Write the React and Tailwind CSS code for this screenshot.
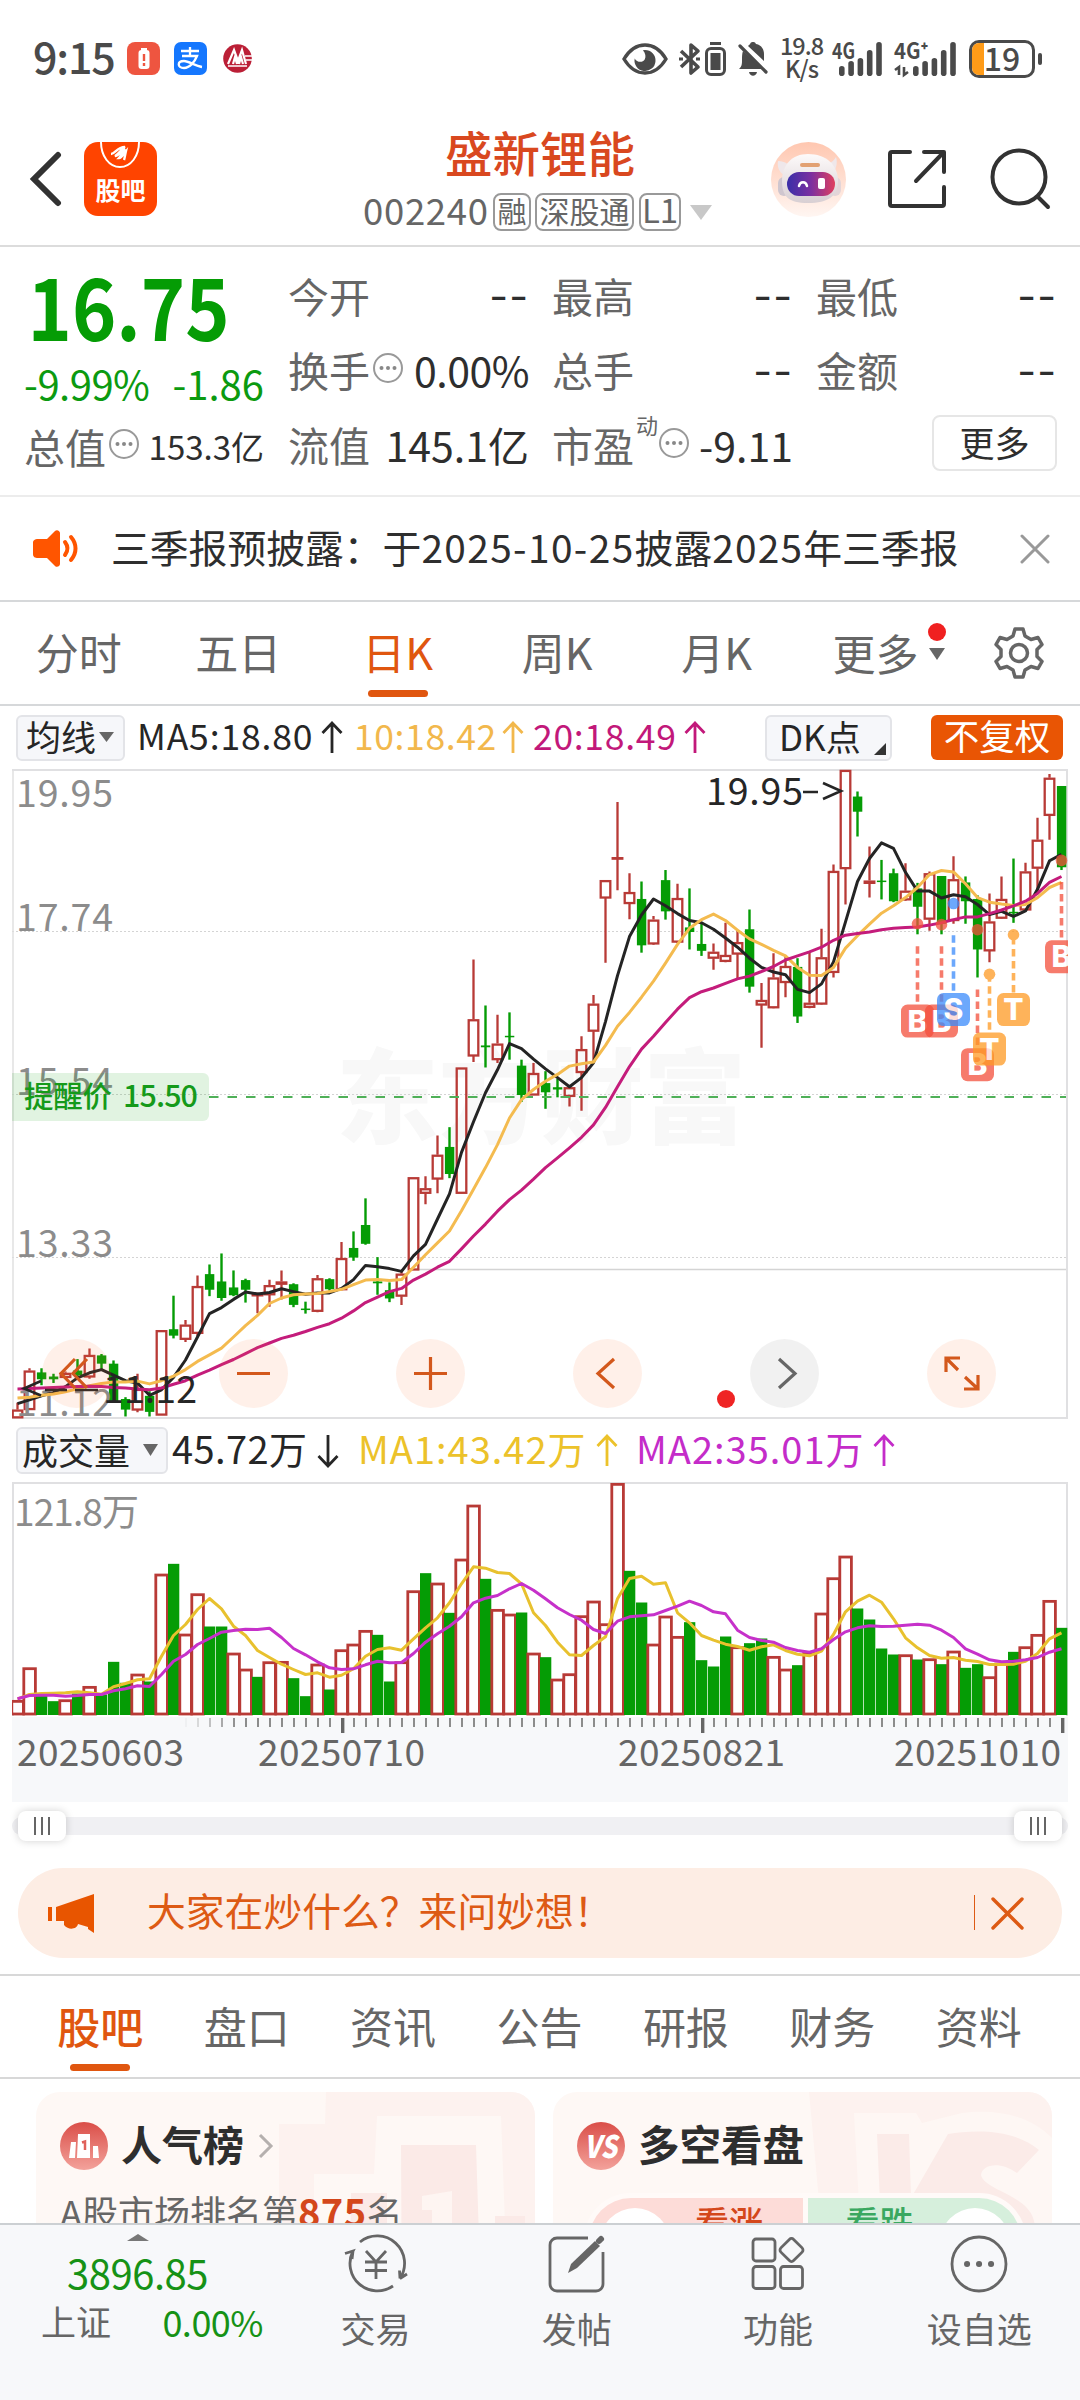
import React from 'react';

const UP = '#b83a36';
const DOWN = '#059c05';

// shared horizontal position of the n-th trading day inside a pane
const dayX = (n) => 5.5 + n * 12;
const priceY = (v) => (v - 150) * 0.4592;
const volumeY = (v) => v / 3 - 82.5;

// [direction, high, body top, body bottom, low]
const candles = [
  ['r', 1530, 1545, 1563, 1563], ['r', 1455, 1460, 1545, 1545], ['g', 1455, 1464, 1479, 1492], ['g', 1467, 1473, 1479, 1487],
  ['r', 1462, 1465, 1475, 1477], ['g', 1435, 1460, 1470, 1475], ['r', 1412, 1426, 1474, 1478], ['g', 1424, 1427, 1445, 1458],
  ['g', 1438, 1445, 1528, 1528], ['g', 1518, 1522, 1545, 1560], ['r', 1467, 1500, 1546, 1551], ['g', 1505, 1515, 1550, 1560],
  ['r', 1372, 1372, 1557, 1557], ['g', 1297, 1370, 1384, 1390], ['r', 1350, 1360, 1392, 1398], ['r', 1253, 1276, 1379, 1385],
  ['g', 1229, 1250, 1284, 1298], ['g', 1205, 1266, 1302, 1308], ['g', 1242, 1279, 1296, 1298], ['g', 1260, 1263, 1284, 1312],
  ['r', 1290, 1293, 1295, 1335], ['r', 1262, 1274, 1295, 1321], ['r', 1242, 1266, 1272, 1305], ['g', 1270, 1272, 1317, 1322],
  ['g', 1310, 1325, 1328, 1336], ['r', 1252, 1259, 1331, 1333], ['g', 1259, 1261, 1283, 1288], ['r', 1180, 1215, 1284, 1285],
  ['g', 1157, 1193, 1214, 1221], ['g', 1085, 1143, 1184, 1186], ['g', 1213, 1266, 1270, 1295], ['g', 1268, 1285, 1303, 1311],
  ['r', 1243, 1249, 1298, 1317], ['r', 1039, 1039, 1241, 1241], ['r', 1037, 1063, 1074, 1098], ['r', 948, 990, 1043, 1074],
  ['g', 930, 973, 1032, 1041], ['r', 800, 800, 1074, 1074], ['r', 565, 695, 775, 788], ['g', 665, 752, 756, 800],
  ['r', 685, 748, 783, 790], ['g', 680, 731, 734, 783], ['g', 783, 796, 860, 875], ['r', 790, 812, 860, 860],
  ['g', 808, 834, 854, 890], ['g', 825, 843, 848, 865], ['r', 840, 843, 863, 885], ['r', 732, 760, 811, 894],
  ['r', 642, 661, 721, 785], ['r', 392, 392, 431, 572], ['r', 222, 342, 345, 414], ['r', 377, 418, 443, 477],
  ['g', 395, 433, 534, 550], ['r', 470, 478, 531, 533], ['g', 370, 392, 460, 478], ['r', 400, 431, 527, 529],
  ['g', 410, 495, 505, 543], ['g', 483, 531, 546, 557], ['r', 530, 548, 562, 587], ['r', 485, 555, 569, 571],
  ['r', 500, 527, 553, 605], ['g', 456, 499, 624, 637], ['r', 616, 653, 664, 757], ['r', 551, 604, 670, 671],
  ['r', 555, 579, 615, 647], ['g', 562, 581, 689, 703], ['r', 548, 659, 669, 671], ['r', 498, 560, 662, 663],
  ['r', 358, 372, 593, 604], ['r', 152, 152, 367, 445], ['g', 199, 210, 243, 297], ['r', 319, 393, 399, 430],
  ['g', 348, 393, 396, 434], ['g', 367, 377, 438, 440], ['r', 355, 415, 435, 437], ['g', 398, 410, 450, 510],
  ['r', 373, 377, 477, 502], ['g', 383, 383, 487, 510], ['r', 340, 390, 480, 487], ['g', 384, 397, 438, 487],
  ['g', 425, 433, 543, 604], ['r', 421, 482, 546, 571], ['r', 384, 433, 475, 476], ['g', 345, 461, 464, 485],
  ['r', 354, 373, 457, 460], ['r', 256, 304, 366, 420], ['r', 161, 169, 251, 304], ['g', 187, 187, 364, 370],
];

const ma5 = [
  1532, 1524, 1515, 1508, 1495, 1476, 1465, 1458, 1470, 1482, 1487, 1514, 1502, 1475, 1437, 1387, 1336, 1323, 1305, 1289, 1293, 1290,
  1282, 1288, 1294, 1291, 1291, 1281, 1262, 1231, 1234, 1238, 1244, 1210, 1185, 1130, 1075, 985, 918, 855, 805, 748, 759, 782,
  803, 822, 842, 822, 790, 700, 600, 515, 468, 433, 448, 465, 480, 485, 499, 518, 538, 562, 582, 592, 598, 630,
  637, 618, 570, 483, 395, 345, 311, 323, 375, 416, 416, 431, 424, 428, 445, 467, 460, 471, 459, 412, 350, 336,
];
const ma10 = [
  1520, 1518, 1514, 1511, 1506, 1500, 1493, 1488, 1485, 1485, 1483, 1489, 1482, 1472, 1458, 1440, 1426, 1411, 1387, 1362, 1340, 1314,
  1302, 1295, 1293, 1292, 1288, 1283, 1273, 1263, 1262, 1264, 1262, 1235, 1208, 1182, 1156, 1112, 1065, 1018, 968, 910, 870, 848,
  830, 815, 797, 792, 788, 752, 710, 680, 647, 612, 573, 532, 497, 478, 466, 480, 501, 520, 532, 545, 557, 582,
  599, 600, 582, 540, 513, 488, 464, 448, 430, 408, 380, 371, 374, 400, 430, 440, 444, 447, 445, 430, 408, 397,
];
const ma20 = [
  1500, 1499, 1498, 1497, 1496, 1495, 1494, 1495, 1497, 1498, 1500, 1502, 1498, 1490, 1482, 1470, 1459, 1447, 1436, 1423, 1410, 1400,
  1390, 1383, 1375, 1366, 1358, 1346, 1330, 1312, 1300, 1288, 1281, 1263, 1250, 1235, 1222, 1195, 1167, 1141, 1113, 1088, 1067, 1043,
  1018, 997, 975, 952, 925, 887, 842, 798, 760, 732, 702, 673, 648, 635, 627, 617, 607, 601, 591, 580, 566, 557,
  548, 538, 523, 512, 508, 505, 500, 497, 495, 494, 490, 485, 478, 472, 472, 465, 457, 448, 438, 421, 397, 384,
];

const volumeColor = 'rrggrgrgggrgrgrrggrrgrrggrgrrrggrrgrgrrgrrgrgrrrrrrggrrrgggggrggrrgrrrrggggrgrgrggrrgrrrg'.split('');
volumeColor.splice(0, volumeColor.length, ...'rrggrgrgggrgrgrrggrrgrrggrgrrrggrrgrgrrgrrgrgrrrrrr', ...'ggrrrgggg', ...'rggrrgrrrrgggg', ...'rgrgrggrrgrrrg');
const volumes = [
  902, 804, 888, 905, 900, 882, 860, 885, 787, 850, 823, 846, 523, 493, 703, 582, 681, 681, 760, 808, 832, 786,
  785, 836, 890, 793, 870, 750, 733, 692, 706, 846, 786, 573, 521, 550, 640, 478, 316, 538, 629, 643, 639, 760,
  773, 838, 822, 648, 604, 672, 251, 514, 609, 733, 649, 710, 668, 782, 801, 711, 741, 731, 717, 770, 808, 797,
  758, 640, 534, 469, 627, 660, 747, 765, 765, 780, 777, 794, 754, 805, 794, 831, 790, 757, 741, 704, 602, 685,
];
const volMa1 = [
  898, 885, 882, 881, 880, 877, 880, 884, 862, 852, 841, 838, 770, 708, 675, 630, 597, 628, 680, 708, 753, 774,
  794, 810, 825, 820, 833, 827, 808, 770, 750, 745, 752, 718, 685, 655, 610, 553, 502, 506, 519, 522, 553, 640,
  678, 728, 766, 768, 738, 712, 598, 537, 530, 554, 550, 640, 670, 708, 722, 734, 741, 752, 742, 736, 753, 764,
  769, 755, 705, 637, 605, 587, 608, 658, 715, 745, 768, 776, 774, 782, 786, 795, 795, 794, 785, 762, 718, 700,
];
const volMa2 = [
  898, 888, 887, 887, 890, 888, 885, 885, 874, 868, 859, 861, 825, 785, 765, 735, 717, 698, 693, 689, 690, 686,
  714, 747, 766, 787, 805, 810, 808, 796, 785, 790, 789, 762, 728, 703, 680, 652, 610, 596, 588, 568, 552, 572,
  598, 625, 645, 662, 690, 702, 665, 652, 649, 646, 633, 620, 605, 618, 637, 643, 692, 714, 723, 728, 744, 753,
  758, 748, 720, 697, 685, 679, 681, 680, 677, 674, 677, 692, 714, 748, 764, 781, 787, 785, 781, 774, 758, 748,
];

const markers = [
  { day: 75, type: 'B', dot: 487, line: 536, badge: 663 },
  { day: 77, type: 'B', dot: 489, line: 536, badge: 663 },
  { day: 78, type: 'S', dot: 443, line: 512, badge: 638 },
  { day: 80, type: 'B', dot: 500, line: 630, badge: 758 },
  { day: 81, type: 'T', dot: 597, line: 597, badge: 724 },
  { day: 83, type: 'T', dot: 511, line: 516, badge: 638 },
  { day: 87, type: 'B', dot: 349, line: 396, badge: 523 },
];
const markerColor = { B: '#f4503c', S: '#3b8bfb', T: '#fe9a24' };

const points = (values, toY) => values.map((v, n) => `${dayX(n)},${toY(v).toFixed(1)}`).join(' ');

function StatusBar() {
  return (
    <div className="flex h-[107px] shrink-0 items-center pt-[10px] pl-[33px] text-[#4a4a4a]">
      <span className="w-[94px] pb-[6px] text-[43px] font-medium leading-none tracking-[-1.200px]">9:15</span>
      <div className="flex h-[33px] w-[33px] items-center justify-center rounded-[8px] bg-[#ee5540]">
        <svg className="h-[23px] w-[14px]" viewBox="0 0 14 23">
          <rect x="4" y="1" width="6" height="3" fill="#fff" />
          <rect x="1.5" y="3" width="11" height="19" rx="3" fill="#fff" />
          <path d="M7 7v7M7 16v3" stroke="#ee5540" strokeWidth="2.4" />
        </svg>
      </div>
      <div className="ml-[14px] flex h-[33px] w-[33px] items-center justify-center rounded-[7px] bg-[#1577fe]">
        <svg className="h-[25px] w-[27px]" viewBox="0 0 27 25" fill="none" stroke="#fff" strokeWidth="2.3">
          <path d="M4 5h18M13 1v9M5 10h15c-2 5-7 12-13 12-7 0-7-7 0-7 5 0 11 5 18 6" />
        </svg>
      </div>
      <svg className="ml-[16px] h-[29px] w-[29px]" viewBox="0 0 29 29">
        <circle cx="14.5" cy="14.5" r="14.3" fill="#bb1f36" />
        <path d="M5 20L11 6l4 11 4-11 4 14M10 20l2-7 2 7M16 20l2-7 2 7" fill="none" stroke="#fff" strokeWidth="2.2" />
        <path d="M5 22h19M22 12h7M23 16h6" stroke="#fff" strokeWidth="1.6" />
      </svg>

      <svg className="ml-[370px] h-[32px] w-[46px]" viewBox="0 0 46 32">
        <path d="M2 16C8 6 16 2 23 2s15 4 21 14c-6 10-14 14-21 14S8 26 2 16z" fill="none" stroke="#4a4a4a" strokeWidth="3.4" />
        <path d="M23 7a10.500 10.500 0 1 1-10.300 8.500c2 4 8 4.500 10 1 1.500-3 .8-6-1.800-9.200z" fill="#4a4a4a" />
      </svg>
      <svg className="ml-[11px] h-[34px] w-[22px]" viewBox="0 0 22 34" fill="none" stroke="#4a4a4a" strokeWidth="3.6">
        <path d="M2 9l17 16-7 6V3l7 6L2 25" strokeLinejoin="round" />
        <path d="M0 17h4M17 17h4" strokeWidth="3" />
      </svg>
      <svg className="ml-[4px] h-[34px] w-[21px]" viewBox="0 0 21 34">
        <path d="M5 1.500h11" stroke="#4a4a4a" strokeWidth="3" />
        <rect x="1.500" y="6.500" width="18" height="26" rx="4.500" fill="none" stroke="#4a4a4a" strokeWidth="3" />
        <rect x="5.500" y="11" width="10" height="17" fill="#4a4a4a" />
      </svg>
      <svg className="ml-[12px] h-[34px] w-[30px]" viewBox="0 0 30 34">
        <path d="M15 0a3 3 0 0 1 3 2c6 1 8 6 8 10v7L10 4c1-1 2-2 2-2a3 3 0 0 1 3-2zM5 9l20 18H1c3-3 3-5 3-9 0-4 0-6 1-9zM11 30h8c-1 5-7 5-8 0z" fill="#4a4a4a" />
        <path d="M2 4l26 26" stroke="#4a4a4a" strokeWidth="3.200" strokeLinecap="round" />
      </svg>
      <div className="ml-[12px] flex w-[43px] flex-col items-center pb-[3px] text-[23.500px] font-medium leading-[23px] tracking-[-1px]">
        <span>19.8</span>
        <span>K/s</span>
      </div>
      <Signal className="ml-[9px]" label="4G" />
      <Signal className="ml-[12px]" label="4G⁺" arrows />
      <div className="relative ml-[13px] flex h-[38px] w-[66px] items-center justify-center rounded-[10px] border-[3px] border-[#4a4a4a]">
        <div className="absolute inset-y-0 left-0 w-[12px] rounded-l-[7px] bg-[#ff9b18]" />
        <span className="relative pb-[4px] text-[32px] font-medium leading-none">19</span>
      </div>
      <div className="ml-[3px] h-[12px] w-[4px] rounded-full bg-[#4a4a4a]" />
    </div>
  );
}

function Signal({ label, arrows, className }) {
  return (
    <svg className={`h-[36px] overflow-visible ${arrows ? 'w-[62px]' : 'w-[50px]'} ${className}`} viewBox={arrows ? '0 0 62 36' : '0 0 50 36'}>
      <text x="0" y="18" fontSize="22" fontWeight="700" fill="#4a4a4a" textLength={arrows ? 33 : 23} lengthAdjust="spacingAndGlyphs">
        {label}
      </text>
      {arrows && <path d="M5 34V26l-4 3M10 26v8l4-3" stroke="#4a4a4a" strokeWidth="2.600" fill="none" />}
      {[10, 15, 18, 26, 34].map((h, n) => (
        <rect key={h} x={(arrows ? 19 : 7) + n * 9.3} y={35 - h} width="5.600" height={h} rx="2.800" fill="#4a4a4a" />
      ))}
    </svg>
  );
}

function Header() {
  return (
    <header className="flex h-[140px] shrink-0 items-center border-b-2 border-[#dcdcdc] pt-[6px]">
      <svg className="ml-[29px] h-[56px] w-[33px]" viewBox="0 0 33 56" fill="none" stroke="#323232" strokeWidth="6" strokeLinecap="round">
        <path d="M29 4L5 28l24 24" />
      </svg>
      <div className="relative ml-[22px] h-[74px] w-[73px] overflow-hidden rounded-[14px] bg-[#ff4400] pt-[35px] text-center">
        <svg className="absolute left-[14px] top-0 h-[27px] w-[44px]" viewBox="0 0 44 27" fill="none" stroke="#fff" strokeWidth="2">
          <path d="M3 0c0 14 8 25 19 25S41 14 41 0" />
          <path d="M13 12c4 0 6-7 14-7-4 2-6 7-10 9 4 0 6-5 10-7-3 4-3 6-6 9 3 0 5-5 7-7-1 4-1 6-2 9" strokeWidth="2.400" />
        </svg>
        <span className="block text-[25px] font-bold leading-[25px] text-white">股吧</span>
      </div>
      <div className="ml-[206px] w-[408px]">
        <h1 className="pl-[82px] text-[47.500px] font-medium leading-[50px] text-[#d9481f]">盛新锂能</h1>
        <div className="mt-[16px] flex h-[38px] items-center text-[#666]">
          <span className="w-[130px] pb-[4px] text-[36.500px] leading-none tracking-[0.700px]">002240</span>
          <span className="flex h-[38px] w-[38px] justify-center rounded-[8px] border-2 border-[#999] text-[29px] leading-[30px]">融</span>
          <span className="ml-[4px] flex h-[38px] w-[99px] justify-center rounded-[8px] border-2 border-[#999] text-[30px] leading-[30px]">深股通</span>
          <span className="ml-[5px] flex h-[38px] w-[42px] justify-center rounded-[8px] border-2 border-[#999] text-[33px] leading-[29px]">L1</span>
          <svg className="ml-[9px] h-[15px] w-[22px]" viewBox="0 0 22 15"><path d="M0 0h22L11 15z" fill="#c8c8c8" /></svg>
        </div>
      </div>
      <Robot />
      <svg className="ml-[41px] h-[60px] w-[60px]" viewBox="0 0 60 60" fill="none" stroke="#323232" strokeWidth="4" strokeLinecap="round" strokeLinejoin="round">
        <path d="M23 3H5a2 2 0 0 0-2 2v50a2 2 0 0 0 2 2h50a2 2 0 0 0 2-2V38M37 3h20v20M55 5L29 32" />
      </svg>
      <svg className="ml-[43px] h-[62px] w-[62px] shrink-0" viewBox="0 0 62 62" fill="none" stroke="#323232" strokeWidth="4" strokeLinecap="round">
        <circle cx="29" cy="29" r="26.500" />
        <path d="M48 49l10 10" />
      </svg>
    </header>
  );
}

function Robot() {
  return (
    <svg className="h-[77px] w-[75px] shrink-0" viewBox="0 0 75 77">
      <defs>
        <linearGradient id="halo" x1="0" y1="0" x2="0" y2="1">
          <stop offset="0" stopColor="#ffc7b0" />
          <stop offset="1" stopColor="#fff6f2" />
        </linearGradient>
        <linearGradient id="visor">
          <stop offset="0" stopColor="#3a2fa8" />
          <stop offset="0.500" stopColor="#7b2fa0" />
          <stop offset="1" stopColor="#e0405f" />
        </linearGradient>
        <linearGradient id="shell" x1="0" y1="0" x2="0" y2="1">
          <stop offset="0" stopColor="#fdfafa" />
          <stop offset="1" stopColor="#d8cfd3" />
        </linearGradient>
      </defs>
      <circle cx="37.500" cy="38.500" r="37.500" fill="url(#halo)" />
      <path d="M7 20c4 0 8 1 10 4l-4 10c-5-3-7-8-6-14zM65 16c2 6 0 14-5 18l-6-10c4-1 8-3 11-8z" fill="#efe7ea" />
      <rect x="7" y="36" width="12" height="19" rx="6" fill="#cfc6cf" />
      <rect x="58" y="36" width="12" height="19" rx="6" fill="#e3d5d8" />
      <path d="M37 13c18 0 30 11 30 27 0 15-10 22-30 22S11 55 11 40c0-16 10-27 26-27z" fill="url(#shell)" />
      <rect x="16" y="31" width="48" height="24" rx="12" fill="url(#visor)" />
      <rect x="29" y="22" width="20" height="4" rx="2" fill="#e2a173" />
      <path d="M28 45c1-5 7-5 8 0" fill="none" stroke="#fff" strokeWidth="2.500" strokeLinecap="round" />
      <rect x="47" y="37" width="7" height="11" rx="2" fill="#fff" />
    </svg>
  );
}

function Info({ className = '' }) {
  return (
    <svg className={`h-[32px] w-[32px] shrink-0 ${className}`} viewBox="0 0 32 32">
      <circle cx="16" cy="16" r="14" fill="none" stroke="#999" strokeWidth="2" />
      <circle cx="9.500" cy="16" r="2" fill="#888" />
      <circle cx="16" cy="16" r="2" fill="#888" />
      <circle cx="22.500" cy="16" r="2" fill="#888" />
    </svg>
  );
}

function Quote({ label, children, info }) {
  return (
    <div className="flex items-center text-[41px] leading-none text-[#666]">
      <span className="whitespace-nowrap">{label}</span>
      {info && <Info className="ml-[2px] mb-[4px]" />}
      <span className="ml-auto whitespace-nowrap text-[#2e2e2e]">{children}</span>
    </div>
  );
}

const Blank = () => <span className="font-['Inter'] tracking-[1px]">--</span>;

function Quotes() {
  return (
    <section className="flex h-[250px] shrink-0 border-b-2 border-[#ececec]">
      <div className="ml-[24px] w-[240px] text-[#0b9a10]">
        <div className="mt-[14px] h-[86px] w-[230px] origin-left scale-x-[0.875] pl-[4px] text-[86px] font-bold leading-[86px] text-[#059c05]">16.75</div>
        <div className="mt-[14px] flex h-[44px] justify-between text-[40px] leading-[44px]">
          <span className="tracking-[-0.500px]">-9.99%</span>
          <span>-1.86</span>
        </div>
        <div className="mt-[19px] flex h-[44px] items-center text-[41px] leading-none text-[#666]">
          总值
          <Info className="ml-[2px] mb-[4px]" />
          <span className="ml-auto whitespace-nowrap text-[33px] text-[#2e2e2e]">153.3亿</span>
        </div>
      </div>
      <div className="ml-[24px] grid w-[769px] grid-cols-3 grid-rows-[74px_75px_75px] gap-x-[23px] pt-[11px]">
        <Quote label="今开"><Blank /></Quote>
        <Quote label="最高"><Blank /></Quote>
        <Quote label="最低"><Blank /></Quote>
        <Quote label="换手" info><span className="tracking-[-0.500px]">0.00%</span></Quote>
        <Quote label="总手"><Blank /></Quote>
        <Quote label="金额"><Blank /></Quote>
        <Quote label="流值"><span className="text-[41px]">145.1亿</span></Quote>
        <div className="flex items-center text-[41px] leading-none text-[#666]">
          市盈
          <span className="pb-[42px] pl-[2px] text-[22px]">动</span>
          <Info className="mb-[4px]" />
          <span className="ml-auto text-[41px] text-[#2e2e2e]">-9.11</span>
        </div>
        <button className="mt-[8px] ml-auto h-[56px] w-[125px] rounded-[8px] border-2 border-[#e6e6e6] pb-[4px] text-[35px] leading-none text-[#2e2e2e]">更多</button>
      </div>
    </section>
  );
}

function Notice() {
  return (
    <section className="flex h-[105px] shrink-0 items-center border-b-2 border-[#d6d8da] pl-[33px]">
      <svg className="h-[37px] w-[46px]" viewBox="0 0 46 37">
        <path d="M5 9h9L22 1c2-2 5 0 5 2v31c0 2-3 4-5 2l-8-8H5c-3 0-5-1-5-4V13c0-3 2-4 5-4z" fill="#ff5500" />
        <path d="M32 12c3 4 3 9 0 13M38 7c6 7 6 16 0 23" fill="none" stroke="#ff5500" strokeWidth="4" strokeLinecap="round" />
      </svg>
      <p className="ml-[32px] w-[860px] pb-[5px] text-[38.800px] leading-none whitespace-nowrap text-[#2e2e2e]">
        三季报预披露：于<span className="tracking-[1.400px]">2025-10-25</span>披露<span className="tracking-[1.200px]">2025</span>年三季报
      </p>
      <svg className="ml-[49px] h-[30px] w-[30px] shrink-0" viewBox="0 0 30 30" stroke="#999" strokeWidth="3" strokeLinecap="round">
        <path d="M2 2l26 26M28 2L2 28" />
      </svg>
    </section>
  );
}

function PeriodTabs() {
  const tabs = ['分时', '五日', '日K', '周K', '月K'];
  return (
    <nav className="flex h-[104px] shrink-0 items-center border-b-2 border-[#d6d8da] text-[43px] leading-none text-[#666]">
      {tabs.map((tab) => (
        <div key={tab} className={`relative -left-[1px] flex h-full w-[159.500px] items-center justify-center pb-[3px] ${tab === '日K' ? 'text-[#e0560f]' : ''}`}>
          {tab}
          {tab === '日K' && <span className="absolute bottom-[7px] h-[7px] w-[60px] rounded-full bg-[#e0560f]" />}
        </div>
      ))}
      <div className="ml-[35px] pb-[2px]">更多</div>
      <div className="mb-[10px] ml-[9px] flex flex-col items-center">
        <span className="mt-[-14px] h-[18px] w-[18px] rounded-full bg-[#f02020]" />
        <svg className="mt-[7px] h-[12px] w-[16px]" viewBox="0 0 16 12"><path d="M0 0h16L8 12z" fill="#666" /></svg>
      </div>
      <svg className="ml-[46px] h-[54px] w-[54px]" viewBox="0 0 54 54" fill="none" stroke="#666" strokeWidth="3.500" strokeLinejoin="round">
        <path d="M23 3h8l2 7 6 3.500 7-2 4 7-5 5v7l5 5-4 7-7-2-6 3.500-2 7h-8l-2-7-6-3.500-7 2-4-7 5-5v-7l-5-5 4-7 7 2 6-3.500z" />
        <circle cx="27" cy="27" r="8.500" />
      </svg>
    </nav>
  );
}

function Candle({ n, data }) {
  const [dir, high, top, bottom, low] = data;
  const x = dayX(n);
  const y = priceY(top);
  const h = Math.max(priceY(bottom) - y, 1.5);
  if (dir === 'g') {
    return (
      <g fill={DOWN}>
        <rect x={x - 1.2} y={priceY(high)} width="2.400" height={priceY(low) - priceY(high)} />
        <rect x={x - 4.6} y={y} width="9.400" height={h} />
      </g>
    );
  }
  return (
    <g fill="none" stroke={UP} strokeWidth="2.300">
      <path d={`M${x} ${priceY(high)}V${y}M${x} ${y + h}V${priceY(low)}`} />
      <rect x={x - 4.8} y={y + 1} width="9.600" height={Math.max(h - 1.5, 0.5)} />
    </g>
  );
}

function PriceChart() {
  const labels = [['19.95', 38], ['17.74', 162], ['15.54', 326], ['13.33', 488], ['11.12', 647]];
  return (
    <div className="relative ml-[12px] h-[650px] w-[1056px] shrink-0">
      <svg className="h-[650px] w-[1056px]" viewBox="0 0 1056 650">
        <text x="324" y="367" fontSize="103" fontWeight="900" fill="#f8f8f8" textLength="410" lengthAdjust="spacingAndGlyphs">东方财富</text>
        <g stroke="#d4d4d4" strokeDasharray="2 2">
          <path d="M0 162.500h1056M0 325.500h1056M0 488.500h1056" />
        </g>
        <path d="M405 500.500h650" stroke="#d4d4d4" strokeWidth="1.500" />
        <path d="M1 0V650" stroke="#e0e0e0" strokeWidth="1.500" />
        <path d="M0 1H1055V649H0" fill="none" stroke="#e0e0e2" strokeWidth="2" />
        {candles.map((c, n) => <Candle key={n} n={n} data={c} />)}
        <g fill="#8c8c8c" fontSize="37.500">
          {labels.map(([text, y]) => <text key={text} x="4" y={y} textLength="97">{text}</text>)}
        </g>
        <path d="M0 304H191a6 6 0 0 1 6 6V346a6 6 0 0 1-6 6H0z" fill="#059c05" fillOpacity="0.120" />
        <text x="12" y="338" fontSize="29.500" fontWeight="500" fill="#159a1a" textLength="88">提醒价</text>
        <text x="111" y="338" fontSize="30.500" fontWeight="500" fill="#159a1a" textLength="75">15.50</text>
        <path d="M197 328H1054" stroke="#4fb058" strokeWidth="1.800" strokeDasharray="9.500 9" />
        <g fill="none" strokeWidth="3" strokeLinejoin="round">
          <polyline points={points(ma5, priceY)} stroke="#242424" />
          <polyline points={points(ma10, priceY)} stroke="#f4bb4f" />
          <polyline points={points(ma20, priceY)} stroke="#c41c7b" />
        </g>
        <g fill="none" stroke="#262626" strokeWidth="2.600">
          <path d="M29 612L12 619.500l17 7M33 621h22M63 621h23" />
          <path d="M791 23h15M811 14l18 8-18 8" />
        </g>
        <g fill="#262626" fontSize="37.500">
          <text x="91" y="634" textLength="94">11.12</text>
          <text x="694" y="36" textLength="97">19.95</text>
        </g>
      </svg>
      <svg className="absolute inset-0 h-[650px] w-[1056px] overflow-hidden" viewBox="0 0 1056 650">
        {markers.map((m) => {
          const x = dayX(m.day);
          const color = markerColor[m.type];
          const top = priceY(m.badge);
          return (
            <g key={m.day} opacity="0.750">
              <circle cx={x} cy={priceY(m.dot)} r="5.800" fill={color} />
              <path d={`M${x} ${priceY(m.line)}V${top}`} stroke={color} strokeWidth="3.600" strokeDasharray="7.500 4.500" />
              <rect x={x - 16.5} y={top} width="33" height="33" rx="6.500" fill={color} />
              <text x={x} y={top + 27} fontSize="30" fontWeight="800" fill="#fff" textAnchor="middle" className="font-['Inter']">{m.type}</text>
            </g>
          );
        })}
      </svg>
      <div className="absolute left-[30px] top-[570px] flex gap-[108px]">
        <RoundButton d="M33 20L19 34.500 33 49M45 20L31 34.500 45 49" />
        <RoundButton d="M18 34.500h33" />
        <RoundButton d="M18 34.500h33M34.500 18v33" />
        <RoundButton d="M41 20L25 34.500 41 49" />
        <RoundButton d="M29 20L45 34.500 29 49" muted />
        <RoundButton d="M19 33V19h14M20 20l11 11M51 36v14H37M50 49L38 38" />
      </div>
      <span className="absolute left-[705px] top-[621px] h-[18px] w-[18px] rounded-full bg-[#ef2424]" />
    </div>
  );
}

function RoundButton({ d, muted }) {
  return (
    <svg className="h-[69px] w-[69px]" viewBox="0 0 69 69">
      <circle cx="34.500" cy="34.500" r="34.500" fill={muted ? '#000' : '#fb6a2c'} fillOpacity={muted ? 0.055 : 0.1} />
      <path d={d} fill="none" stroke={muted ? '#666' : '#d3581c'} strokeWidth="3.200" />
    </svg>
  );
}

function Arrow({ down, className }) {
  return (
    <svg className={`h-[34px] w-[22px] shrink-0 ${className}`} viewBox="0 0 22 34" fill="none" stroke="currentColor" strokeWidth="2.800">
      <path d={down ? 'M11 1v30M1.500 22l9.500 10 9.500-10' : 'M11 32V3M1.500 12L11 2l9.500 10'} />
    </svg>
  );
}

function PriceHeader() {
  return (
    <div className="relative flex h-[63px] shrink-0 items-center whitespace-nowrap text-[35px] leading-none text-[#262626]">
      <div className="ml-[16px] flex h-[46px] w-[109px] shrink-0 items-center rounded-[6px] border-2 border-[#e3e4e8] bg-[#f6f7fa] pb-[4px] pl-[8px] text-[35px]">
        均线
        <svg className="ml-[3px] mt-[3px] h-[10px] w-[15px]" viewBox="0 0 15 10"><path d="M0 0h15L7.500 10z" fill="#666" /></svg>
      </div>
      <span className="ml-[12px] w-[180px] pb-[5px] text-[35.500px] tracking-[0.850px]">MA5:18.80</span>
      <Arrow className="ml-[4px]" />
      <span className="ml-[11px] w-[140px] pb-[5px] text-[35.500px] tracking-[0.600px] text-[#f2b84c]">10:18.42</span>
      <Arrow className="ml-[8px] text-[#f2b84c]" />
      <span className="ml-[9px] w-[145px] pb-[5px] text-[35.500px] tracking-[0.700px] text-[#c2187a]">20:18.49</span>
      <Arrow className="ml-[6px] text-[#c2187a]" />
      <div className="relative ml-[59px] flex h-[46px] w-[127px] shrink-0 items-center rounded-[6px] border-2 border-[#e3e4e8] bg-[#f6f7fa] pb-[4px] pl-[12px] text-[35px]">
        DK点
        <svg className="absolute bottom-[4px] right-[4px] h-[12px] w-[12px]" viewBox="0 0 12 12"><path d="M12 0v12H0z" fill="#333" /></svg>
      </div>
      <div className="ml-[39px] flex h-[45px] w-[132px] shrink-0 items-center justify-center rounded-[6px] bg-[#e95504] pb-[5px] text-[35.500px] text-white">不复权</div>
    </div>
  );
}

function VolumeHeader() {
  return (
    <div className="flex h-[63px] shrink-0 items-center whitespace-nowrap text-[38px] leading-none text-[#262626]">
      <div className="ml-[16px] flex h-[47px] w-[152px] shrink-0 items-center rounded-[6px] border-2 border-[#e3e4e8] bg-[#f6f7fa] pb-[3px] pl-[4px] text-[36px]">
        成交量
        <svg className="ml-[13px] mt-[2px] h-[12px] w-[15px]" viewBox="0 0 15 12"><path d="M0 0h15L7.500 12z" fill="#666" /></svg>
      </div>
      <span className="ml-[4px] w-[136px] pb-[5px] tracking-[0.400px]">45.72万</span>
      <Arrow down className="ml-[9px]" />
      <span className="ml-[19px] w-[229px] pb-[5px] tracking-[1px] text-[#ecc22a]">MA1:43.42万</span>
      <Arrow className="ml-[9px] text-[#ecc22a]" />
      <span className="ml-[18px] w-[229px] pb-[5px] tracking-[1px] text-[#c42cc9]">MA2:35.01万</span>
      <Arrow className="ml-[8px] text-[#c42cc9]" />
    </div>
  );
}

function VolumeChart() {
  return (
    <svg className="ml-[12px] h-[235px] w-[1056px] shrink-0" viewBox="0 0 1056 235">
      <path d="M1 0V234M1055 0V234" stroke="#e0e0e2" strokeWidth="2" />
      <path d="M0 1H1056" stroke="#e0e0e2" strokeWidth="2" />
      {volumes.map((v, n) => {
        const y = volumeY(v);
        const x = dayX(n);
        return volumeColor[n] === 'g' ? (
          <rect key={n} x={x - 5.5} y={y} width="11.300" height={233 - y} fill={DOWN} />
        ) : (
          <rect key={n} x={x - 5.7} y={y + 1.2} width="11.600" height={230.8 - y} fill="#fff" stroke={UP} strokeWidth="2.800" />
        );
      })}
      <text x="2" y="44" fontSize="37" fill="#8c8c8c" textLength="125">121.8万</text>
      <g fill="none" strokeWidth="3" strokeLinejoin="round">
        <polyline points={points(volMa1, volumeY)} stroke="#e8c12e" />
        <polyline points={points(volMa2, volumeY)} stroke="#c631ca" />
      </g>
    </svg>
  );
}

function DateAxis() {
  const ticks = Array.from({ length: 74 }, (_, n) => n + 14);
  const dates = [['20250603', 5], ['20250710', 246], ['20250821', 606], ['20251010', 882]];
  return (
    <svg className="ml-[12px] h-[85px] w-[1056px] shrink-0 bg-[#f7f8fa]" viewBox="0 0 1056 85">
      {ticks.map((n) => {
        const long = n % 30 === 27;
        return (
          <rect key={n} x={dayX(n) - 1 + 0.5} y="1" width={long ? 3.4 : 2} height={long ? 15 : 9}
            fill={long ? '#666' : '#8c8c8c'} opacity={Math.min(1, (n - 13) * 0.22 - 0.15)} />
        );
      })}
      <g fill="#666" fontSize="37">
        {dates.map(([text, x]) => <text key={text} x={x} y="49" textLength="167">{text}</text>)}
      </g>
    </svg>
  );
}

function RangeSlider() {
  const handle = (
    <span className="flex h-[30px] w-[48px] items-center justify-center gap-[4.500px] rounded-[8px] bg-white shadow-[0_0_8px_rgba(0,0,0,0.180)]">
      <i className="h-[18px] w-[2.500px] bg-[#666]" />
      <i className="h-[18px] w-[2.500px] bg-[#666]" />
      <i className="h-[18px] w-[2.500px] bg-[#666]" />
    </span>
  );
  return (
    <div className="mx-[12px] mt-[15px] flex h-[18px] shrink-0 items-center justify-between rounded-full bg-[#f0f0f3] px-[6px]">
      {handle}
      {handle}
    </div>
  );
}

function AskBanner() {
  return (
    <div className="mx-[18px] mt-[33px] flex h-[90px] shrink-0 items-center rounded-full bg-[#fdede4] text-[#dd5a14]">
      <svg className="ml-[30px] h-[40px] w-[46px]" viewBox="0 0 46 40" fill="#e85500">
        <path d="M0 14h4v14H0zM8 14L46 1v39l-6-4v-2l-10-3c-1 5-9 7-14 1v-4H8z" />
      </svg>
      <p className="ml-[53px] pb-[8px] text-[38.800px] leading-none">大家在炒什么？来问妙想！</p>
      <span className="ml-auto mb-[2px] h-[35px] w-[1.500px] bg-[#dd5a14]" />
      <svg className="ml-[16px] mr-[38px] h-[33px] w-[33px]" viewBox="0 0 33 33" stroke="#dd5a14" strokeWidth="3.400" strokeLinecap="round">
        <path d="M2 2l29 29M31 2L2 31" />
      </svg>
    </div>
  );
}

function ContentTabs() {
  const tabs = ['股吧', '盘口', '资讯', '公告', '研报', '财务', '资料'];
  return (
    <nav className="mt-[16px] flex h-[105px] shrink-0 justify-center border-y-2 border-[#d8d8d8] pr-[1px] text-[43px] leading-none text-[#666]">
      {tabs.map((tab, n) => (
        <div key={tab} className={`relative flex w-[146.400px] items-center justify-center pb-[3px] ${n === 0 ? 'font-medium text-[#e0560f]' : ''}`}>
          {tab}
          {n === 0 && <span className="absolute bottom-[6px] h-[7px] w-[60px] rounded-full bg-[#e0560f]" />}
        </div>
      ))}
    </nav>
  );
}

function Cards() {
  return (
    <div className="flex min-h-0 flex-1 gap-[18px] overflow-hidden pl-[36px] pt-[13px]">
      <div className="relative h-[240px] w-[499px] shrink-0 overflow-hidden rounded-[24px] bg-[#fef8f5]">
        <svg className="absolute inset-0 h-[240px] w-[499px]" viewBox="0 0 499 240">
          <path d="M290 0h209v240H243V32h46z" fill="#fdf2ef" />
          <path d="M341 24h124l8 216H278V82h60z" fill="#fef8f5" />
          <path d="M365 53h75l6 187h-80zM315 101h36v139h-38zM459 124h30v116h-30z" fill="#fbeae7" />
          <path d="M386 104l30-5v141h-20V118h-10z" fill="#fef5f2" />
        </svg>
        <div className="relative flex h-[108px] items-center pl-[24px]">
          <svg className="h-[48px] w-[48px]" viewBox="0 0 48 48">
            <defs>
              <linearGradient id="disc" x1="0" y1="0" x2="0" y2="1">
                <stop offset="0" stopColor="#da4e48" />
                <stop offset="1" stopColor="#f3a29b" />
              </linearGradient>
            </defs>
            <circle cx="24" cy="24" r="24" fill="url(#disc)" />
            <path d="M18 12h12v24H17zM11 20h5l-1 16H9zM33 24h5l1 12h-6z" fill="#fff" />
            <path d="M22 20.500l3-1V28" fill="none" stroke="#e0615a" strokeWidth="2.500" />
          </svg>
          <h2 className="ml-[13px] pb-[5px] text-[41px] font-bold leading-none text-[#2e2e2e]">人气榜</h2>
          <svg className="ml-[14px] h-[26px] w-[16px]" viewBox="0 0 16 26" fill="none" stroke="#b5b0ae" strokeWidth="3">
            <path d="M2 2l11 11L2 24" />
          </svg>
        </div>
        <p className="relative pl-[24px] text-[36px] leading-[22px] whitespace-nowrap text-[#666]">
          A股市场排名第<b className="text-[38px] tracking-[0.500px] text-[#d4471b]">875</b>名
        </p>
      </div>
      <div className="relative h-[240px] w-[499px] shrink-0 overflow-hidden rounded-[24px] bg-[#fef8f5]">
        <svg className="absolute inset-0 h-[240px] w-[499px]" viewBox="0 0 499 240">
          <path d="M256 0h243v240H278z" fill="#fdf2ef" />
          <path d="M301 21h62l6 10 40-10c40-5 70 5 90 25v194H313z" fill="#fef7f4" />
          <path d="M324 42h32l2 64 37-64c25-4 65-6 91 16l-22 23c-18-13-35-8-36 2 5 20 70 20 50 70l-55 50H331z" fill="#fbebe8" />
        </svg>
        <div className="relative flex h-[108px] items-center pl-[24px]">
          <svg className="h-[48px] w-[48px]" viewBox="0 0 48 48">
            <circle cx="24" cy="24" r="24" fill="url(#disc)" />
            <text x="7" y="36" fontSize="31" fontWeight="900" fontStyle="italic" fill="#fff" textLength="33" lengthAdjust="spacingAndGlyphs">VS</text>
          </svg>
          <h2 className="ml-[13px] pb-[5px] text-[41.500px] font-bold leading-none text-[#2e2e2e]">多空看盘</h2>
        </div>
        <div className="relative ml-[31px] -mt-[7px] grid h-[94px] w-[442px] grid-cols-2 gap-[5px] overflow-hidden rounded-full border-[5px] border-[#fffaf8] bg-[#fffaf8] text-[34px] leading-none">
          <div className="relative bg-[#fddcd8] pl-[106px] pt-[7px] font-medium text-[#d4471b]">
            <span className="absolute left-[11px] top-[10px] h-[70px] w-[70px] rounded-full bg-white" />
            看涨
          </div>
          <div className="relative bg-[#d6efdc] pl-[38px] pt-[7px] font-medium text-[#3aa860]">
            看跌
            <span className="absolute right-[11px] top-[10px] h-[70px] w-[70px] rounded-full bg-white" />
          </div>
        </div>
      </div>
    </div>
  );
}

function BottomBar() {
  return (
    <footer className="flex h-[177px] shrink-0 border-t-2 border-[#ccd0d3] bg-[#f7f8fa] text-[35px] leading-none text-[#666]">
      <div className="flex w-[275px] flex-col items-center text-[#169216]">
        <svg className="mt-[9px] h-[7px] w-[22px]" viewBox="0 0 22 7"><path d="M0 7L11 0l11 7z" fill="#777" /></svg>
        <span className="mt-[11px] text-[40px] tracking-[-0.500px]">3896.85</span>
        <div className="mt-[11px] ml-[29px] flex w-[222px] justify-between">
          <span className="text-[#666]">上证</span>
          <span className="text-[36px] tracking-[-0.500px]">0.00%</span>
        </div>
      </div>
      <NavItem label="交易">
        <path d="M16 10A27.400 27.400 0 0 1 56 46.500l7-4.500M49 54A27.400 27.400 0 0 1 9 19l-8 2.500M56 46.500l-.500-8M9 19l-1 8" />
        <path d="M22 19l10 11 10-11M32 30v17M21 30h22M21 38.500h22" />
      </NavItem>
      <NavItem label="发帖">
        <path d="M43 6H12a7 7 0 0 0-7 7v39a7 7 0 0 0 7 7h39a7 7 0 0 0 7-7V20" />
        <path d="M23 41l3-9L50 9l5 5-23 22z" fill="#666" stroke="none" />
        <path d="M54 9l2-2" strokeWidth="6" strokeLinecap="round" />
      </NavItem>
      <NavItem label="功能">
        <rect x="7" y="7" width="22" height="22" rx="3" />
        <rect x="7" y="34.500" width="22" height="22" rx="3" />
        <rect x="34.500" y="34.500" width="22" height="22" rx="3" />
        <rect x="36.500" y="9" width="18" height="18" rx="3" transform="rotate(45 45.500 18)" />
      </NavItem>
      <NavItem label="设自选">
        <circle cx="32" cy="32" r="27" />
        <path d="M20 32h.1M32 32h.1M44 32h.1" strokeWidth="6" strokeLinecap="round" />
      </NavItem>
    </footer>
  );
}

function NavItem({ label, children }) {
  return (
    <div className="flex w-[201.200px] flex-col items-center pt-[7px]">
      <svg className="h-[64px] w-[64px]" viewBox="0 0 64 64" fill="none" stroke="#666" strokeWidth="2.800">{children}</svg>
      <span className="mt-[14px]">{label}</span>
    </div>
  );
}

export default function App() {
  return (
    <div className="relative flex h-[2400px] w-[1080px] flex-col overflow-hidden bg-white font-['Noto_Sans_CJK_SC',sans-serif]">
      <StatusBar />
      <Header />
      <Quotes />
      <Notice />
      <PeriodTabs />
      <PriceHeader />
      <PriceChart />
      <VolumeHeader />
      <VolumeChart />
      <DateAxis />
      <RangeSlider />
      <AskBanner />
      <ContentTabs />
      <Cards />
      <BottomBar />
    </div>
  );
}
